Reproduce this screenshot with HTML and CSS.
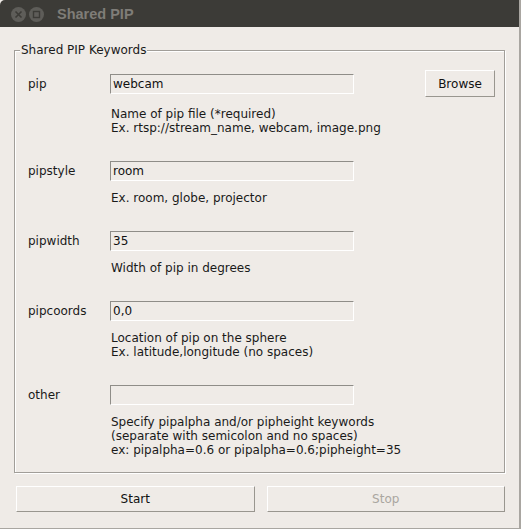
FILE: index.html
```html
<!DOCTYPE html>
<html lang="en">
<head>
    <meta charset="UTF-8">
    <title>Shared PIP</title>
    <link rel="stylesheet" href="styles.css">
</head>
<body>
    <div class="window">
        <div class="titlebar">
            <svg class="controls" width="46" height="27" viewBox="0 0 46 27">
                <circle cx="18.5" cy="14.5" r="7.5" fill="#5e5d59"/>
                <path d="M15.5 11.5 L21.5 17.5 M21.5 11.5 L15.5 17.5" stroke="#3c3b37" stroke-width="1.6"/>
                <circle cx="36.5" cy="14.5" r="7.5" fill="#5e5d59"/>
                <rect x="33.5" y="11.5" width="6" height="6" fill="none" stroke="#3c3b37" stroke-width="1.4"/>
            </svg>
            <span class="title">Shared PIP</span>
        </div>

        <div class="content">
            <div class="group">
                <span class="group-title">Shared PIP Keywords</span>

                <div class="row">
                    <label class="key">pip</label>
                    <input class="field" type="text" value="webcam">
                    <button class="btn browse">Browse</button>
                    <div class="desc">Name of pip file (*required)<br>Ex. rtsp://stream_name, webcam, image.png</div>
                </div>

                <div class="row">
                    <label class="key">pipstyle</label>
                    <input class="field" type="text" value="room">
                    <div class="desc">Ex. room, globe, projector</div>
                </div>

                <div class="row">
                    <label class="key">pipwidth</label>
                    <input class="field" type="text" value="35">
                    <div class="desc">Width of pip in degrees</div>
                </div>

                <div class="row">
                    <label class="key">pipcoords</label>
                    <input class="field" type="text" value="0,0">
                    <div class="desc">Location of pip on the sphere<br>Ex. latitude,longitude (no spaces)</div>
                </div>

                <div class="row">
                    <label class="key">other</label>
                    <input class="field" type="text" value="">
                    <div class="desc">Specify pipalpha and/or pipheight keywords<br>(separate with semicolon and no spaces)<br>ex: pipalpha=0.6 or pipalpha=0.6;pipheight=35</div>
                </div>
            </div>

            <div class="actions">
                <button class="btn">Start</button>
                <button class="btn" disabled>Stop</button>
            </div>
        </div>
    </div>
</body>
</html>
```

FILE: styles.css
```css
body {
    margin: 0;
    padding: 0;
    background: #efebe7;
    font-family: "DejaVu Sans", Verdana, sans-serif;
    font-size: 12px;
    color: #1a1a1a;
}
.window {
    width: 521px;
    height: 529px;
    box-sizing: border-box;
    background: #efebe7;
    border-right: 2px solid #a9a6a1;
    border-bottom: 1px solid #a9a6a1;
    overflow: hidden;
}
.titlebar {
    height: 27px;
    background: #3c3b37;
    border-top-left-radius: 5px;
    display: flex;
    align-items: center;
}
.controls {
    display: block;
    flex: none;
}
.title {
    margin-left: 11px;
    font-family: "Liberation Sans", Arial, sans-serif;
    font-weight: bold;
    font-size: 14.5px;
    color: #7f7d78;
    padding-top: 1px;
}
.content {
    padding: 23px 14px 0 14px;
}
.group {
    position: relative;
    border: 1px solid #a19e99;
    box-shadow: inset 1px 1px 0 #fff, 1px 1px 0 #fff;
    padding: 19px 9px 15px 13px;
}
.group-title {
    position: absolute;
    top: -8px;
    left: 5px;
    padding: 0 1px;
    line-height: 14px;
    background: #efebe7;
}
.row {
    display: grid;
    grid-template-columns: 82px 244px 1fr 70px;
    row-gap: 10px;
    align-items: center;
    margin-bottom: 26px;
}
.row:last-child {
    margin-bottom: 0;
}
.key {
    grid-column: 1;
    grid-row: 1;
}
.field {
    grid-column: 2;
    grid-row: 1;
    height: 20px;
    box-sizing: border-box;
    margin: 0;
    padding: 0 2px;
    font: inherit;
    color: #111;
    background: #efebe7;
    border: 1px solid;
    border-color: #8f8d88 #fff #fff #8f8d88;
    outline: none;
}
.desc {
    grid-column: 2 / span 3;
    grid-row: 2;
    padding-left: 1px;
    line-height: 14px;
}
.btn {
    font: inherit;
    color: #111;
    background: #efebe7;
    border: 1px solid;
    border-color: #fff #99968f #99968f #fff;
    margin: 0;
    padding: 0;
    height: 26px;
}
.btn:disabled {
    color: #aaa6a0;
}
.browse {
    grid-column: 4;
    grid-row: 1;
    height: 27px;
}
.actions {
    display: flex;
    gap: 12px;
    margin-top: 13px;
    padding-left: 2px;
}
.actions .btn {
    flex: 1;
}
```
